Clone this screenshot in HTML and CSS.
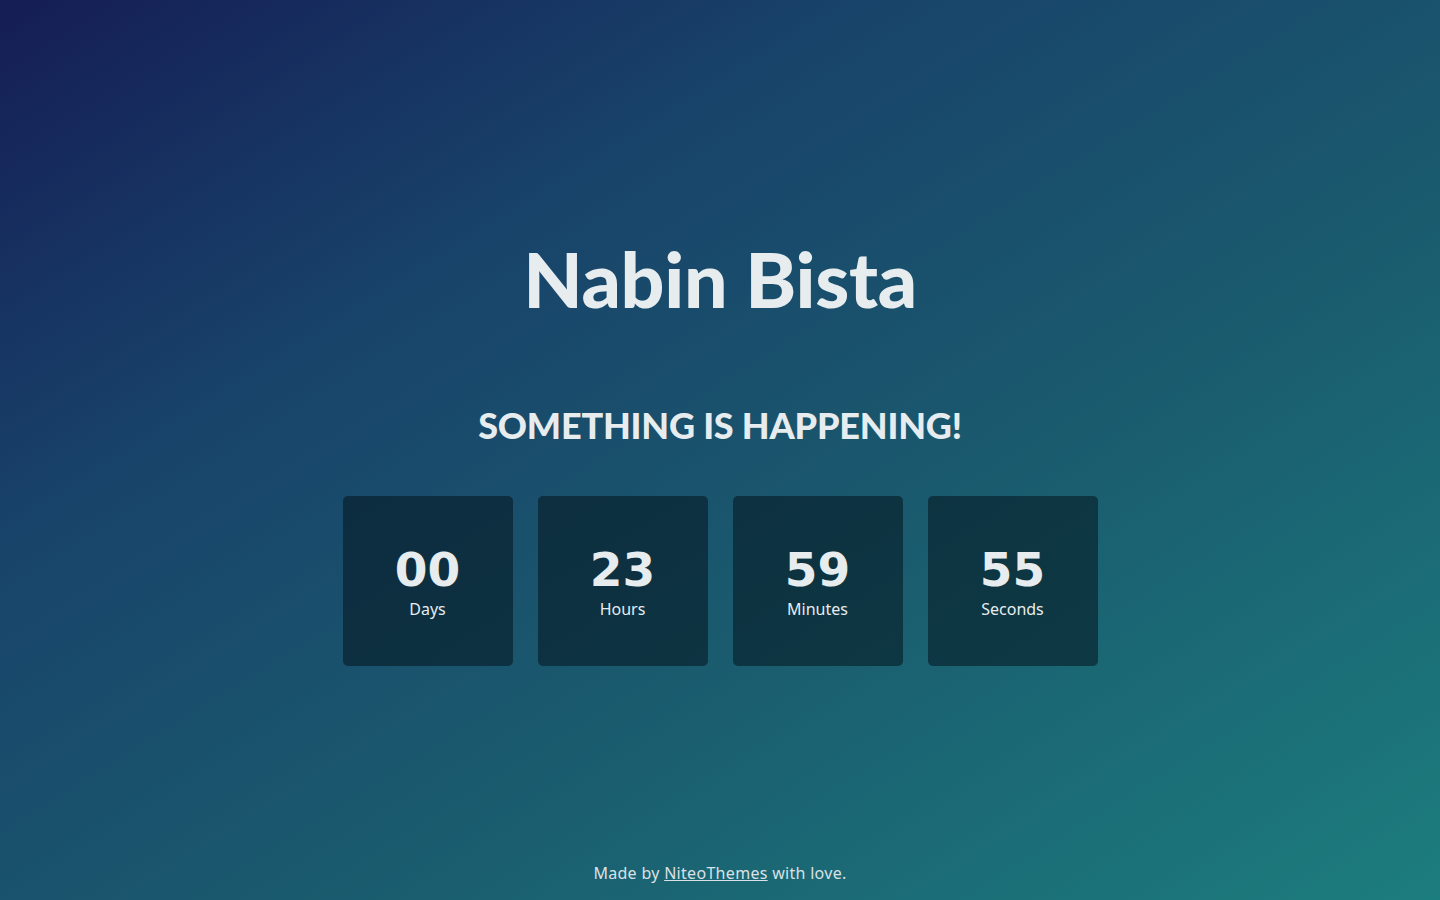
FILE: index.html
```html
<!DOCTYPE html>
<html lang="en">
<head>
<meta charset="utf-8">
<title>Nabin Bista</title>
<link rel="stylesheet" href="styles.css">
</head>
<body>
<main class="page">
  <section class="hero">
    <h1 class="title">Nabin Bista</h1>
    <h2 class="subtitle">SOMETHING IS HAPPENING!</h2>
    <div class="countdown">
      <div class="unit"><span class="num">00</span><span class="label">Days</span></div>
      <div class="unit"><span class="num">23</span><span class="label">Hours</span></div>
      <div class="unit"><span class="num">59</span><span class="label">Minutes</span></div>
      <div class="unit"><span class="num">55</span><span class="label">Seconds</span></div>
    </div>
  </section>
  <footer class="footer">Made by <a href="#">NiteoThemes</a> with love.</footer>
</main>
</body>
</html>
```
FILE: styles.css
```css
* { box-sizing: border-box; }
html, body { margin: 0; padding: 0; }
body {
  min-height: 100vh;
  background: linear-gradient(to bottom right, #151d55 0%, #18436a 30%, #1a5a6e 60%, #1c7d7e 100%);
  color: #e7ecef;
  font-family: "Lato", "Noto Sans", sans-serif;
}
.page {
  min-height: 100vh;
  display: flex;
  flex-direction: column;
  align-items: center;
}
.hero {
  flex: 1;
  display: flex;
  flex-direction: column;
  align-items: center;
  padding-top: 234px;
}
.title {
  margin: 0;
  font-size: 77px;
  line-height: 88px;
  font-weight: 900;
  letter-spacing: -0.3px;
}
.subtitle {
  margin: 80px 0 0;
  font-size: 36px;
  line-height: 46px;
  font-weight: 900;
  letter-spacing: -0.2px;
}
.countdown {
  display: flex;
  gap: 25px;
  margin-top: 48px;
}
.unit {
  width: 170px;
  height: 170px;
  border-radius: 5px;
  background: rgba(4, 20, 30, 0.55);
  display: flex;
  flex-direction: column;
  align-items: center;
  justify-content: center;
  padding-top: 2px;
}
.num {
  font-family: "DejaVu Sans", sans-serif;
  font-size: 47px;
  font-weight: 700;
  line-height: 50px;
  margin-bottom: 3px;
}
.label {
  font-family: "Noto Sans", sans-serif;
  font-size: 16px;
  line-height: 22px;
}
.footer {
  font-family: "Noto Sans", sans-serif;
  font-size: 16px;
  line-height: 22px;
  padding-bottom: 16px;
  letter-spacing: 0.3px;
  color: #d9e1e6;
}
.footer a { color: inherit; }
```
